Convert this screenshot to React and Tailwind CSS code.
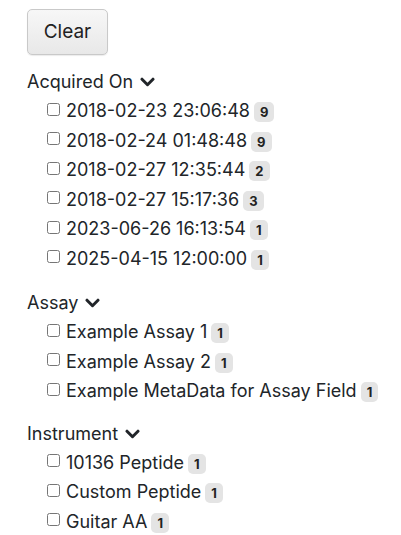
import React from 'react';

const groups = [
    {
        title: 'Acquired On',
        items: [
            ['2018-02-23 23:06:48', 9],
            ['2018-02-24 01:48:48', 9],
            ['2018-02-27 12:35:44', 2],
            ['2018-02-27 15:17:36', 3],
            ['2023-06-26 16:13:54', 1],
            ['2025-04-15 12:00:00', 1],
        ],
    },
    {
        title: 'Assay',
        items: [
            ['Example Assay 1', 1],
            ['Example Assay 2', 1],
            ['Example MetaData for Assay Field', 1],
        ],
    },
    {
        title: 'Instrument',
        items: [
            ['10136 Peptide', 1],
            ['Custom Peptide', 1],
            ['Guitar AA', 1],
        ],
    },
];

const Chevron = () => (
    <svg width="15" height="10" viewBox="0 0 15 10" className="inline-block ml-[7px] align-[1px]">
        <path d="M2 2.2 L7.5 7.7 L13 2.2" fill="none" stroke="#212529" strokeWidth="3" strokeLinecap="round" strokeLinejoin="round" />
    </svg>
);

const App = () => {
    return (
        <div className="min-h-screen bg-white pl-[27px] pt-[9px] text-[#212529] font-['Inter',Arial,sans-serif]">
            <button className="h-[46px] w-[81px] rounded-[5px] border border-[#c9c9c9] bg-gradient-to-b from-[#f7f7f7] to-[#e8e8e8] text-[19px] text-[#222] shadow-[0_1px_1px_rgba(0,0,0,0.08)]">
                Clear
            </button>

            {groups.map((group, gi) => (
                <div key={group.title} className={gi === 0 ? 'mt-[15px]' : gi === 1 ? 'mt-[18px]' : 'mt-[16px]'}>
                    <div className="h-[26px] text-[18px] leading-6">
                        {group.title}
                        <Chevron />
                    </div>
                    {group.items.map(([label, count]) => (
                        <div key={label} className="flex h-[29.5px] items-center pl-[20px]">
                            <input type="checkbox" className="-mt-[3px] mr-[6px] h-[13px] w-[13px] shrink-0" />
                            <span className="whitespace-nowrap text-[18px] leading-[29.5px]">
                                {label}
                                <span className="ml-[4px] inline-block rounded-[5px] bg-[#e4e4e4] px-[6px] py-1 align-baseline text-[13px] font-bold leading-3 text-[#222]">
                                    {count}
                                </span>
                            </span>
                        </div>
                    ))}
                </div>
            ))}
        </div>
    );
};

export default App;
